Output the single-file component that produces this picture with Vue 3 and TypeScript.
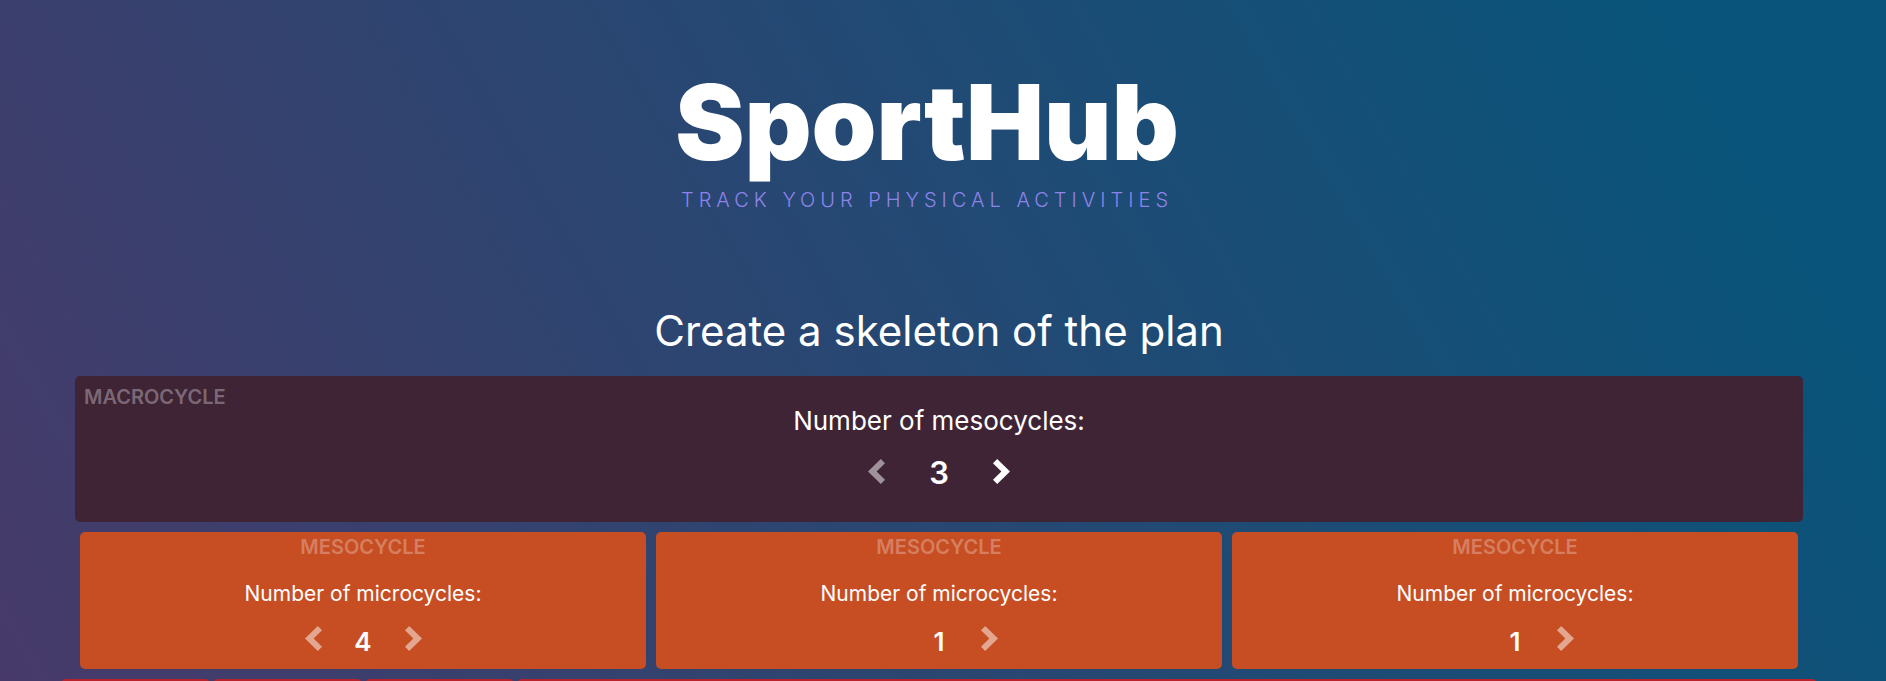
<script setup lang="ts">
import { computed, ref } from 'vue'

const MIN = 1
const MAX_MESO = 4

const microCounts = ref<number[]>([4, 1, 1])
const mesoCount = computed(() => microCounts.value.length)
const microcycles = [1, 2, 3, 4]

function addMeso() {
  if (mesoCount.value < MAX_MESO) microCounts.value.push(MIN)
}

function removeMeso() {
  if (mesoCount.value > MIN) microCounts.value.pop()
}

function changeMicro(index: number, delta: number) {
  microCounts.value[index] = Math.max(MIN, microCounts.value[index] + delta)
}
</script>

<template>
  <div class="page">
    <header class="brand">
      <h1 class="logo">SportHub</h1>
      <p class="tagline">TRACK YOUR PHYSICAL ACTIVITIES</p>
    </header>

    <main class="plan">
      <h2 class="title">Create a skeleton of the plan</h2>

      <section class="macro">
        <span class="label">MACROCYCLE</span>
        <div class="body">
          <p class="question">Number of mesocycles:</p>
          <div class="stepper">
            <button class="arrow dim" type="button" aria-label="Fewer mesocycles" @click="removeMeso">
              <svg width="17" height="25" viewBox="0 0 17 25"><path d="M12.8 0 17 4.2 8.6 12.5 17 20.8 12.8 25 0 12.5z" /></svg>
            </button>
            <span class="count">{{ mesoCount }}</span>
            <button class="arrow" type="button" aria-label="More mesocycles" @click="addMeso">
              <svg width="17" height="25" viewBox="0 0 17 25"><path d="M4.2 0 0 4.2 8.4 12.5 0 20.8 4.2 25 17 12.5z" /></svg>
            </button>
          </div>
        </div>
      </section>

      <div class="mesos">
        <section v-for="(count, i) in microCounts" :key="i" class="meso">
          <span class="label">MESOCYCLE</span>
          <p class="question">Number of microcycles:</p>
          <div class="stepper">
            <button
              class="arrow dim"
              :class="{ hidden: count === MIN }"
              type="button"
              aria-label="Fewer microcycles"
              @click="changeMicro(i, -1)"
            >
              <svg width="17" height="25" viewBox="0 0 17 25"><path d="M12.8 0 17 4.2 8.6 12.5 17 20.8 12.8 25 0 12.5z" /></svg>
            </button>
            <span class="count">{{ count }}</span>
            <button class="arrow dim" type="button" aria-label="More microcycles" @click="changeMicro(i, 1)">
              <svg width="17" height="25" viewBox="0 0 17 25"><path d="M4.2 0 0 4.2 8.4 12.5 0 20.8 4.2 25 17 12.5z" /></svg>
            </button>
          </div>
        </section>
      </div>
    </main>

    <div class="micros">
      <div v-for="n in microcycles" :key="n" class="micro"></div>
    </div>
  </div>
</template>

<style>
body {
  margin: 0;
  overflow: hidden;
}
</style>

<style scoped>
.page {
  height: 100vh;
  overflow: hidden;
  background: linear-gradient(60deg, #473a6a 0%, #09547a 90%);
  color: #fff;
  font-family: Inter, "Liberation Sans", sans-serif;
}

h1,
h2,
p {
  margin: 0;
}

.brand {
  display: flex;
  flex-direction: column;
  align-items: center;
  padding: 67px 32px 0 0;
}

.logo {
  font-size: 104px;
  line-height: 110px;
  font-weight: 900;
}

.tagline {
  margin-top: 11px;
  font-size: 20px;
  line-height: 24px;
  font-weight: 300;
  letter-spacing: 5px;
  color: #8f83ea;
}

.plan {
  padding: 94px 83px 0 75px;
}

.title {
  margin-bottom: 20px;
  font-size: 42px;
  line-height: 50px;
  font-weight: 400;
  text-align: center;
}

.macro {
  display: grid;
  box-sizing: border-box;
  min-height: 146px;
  border-radius: 5px;
  background: #3f2436;
}

.macro > * {
  grid-area: 1 / 1;
}

.label {
  font-size: 20px;
  line-height: 24px;
  font-weight: 600;
  color: rgba(255, 255, 255, 0.28);
}

.macro .label {
  padding: 9px;
  color: rgba(255, 255, 255, 0.33);
}

.body {
  padding-top: 29px;
  text-align: center;
}

.question {
  font-size: 21px;
  line-height: 24px;
}

.macro .question {
  font-size: 26px;
  line-height: 32px;
}

.stepper {
  display: flex;
  justify-content: center;
  align-items: flex-start;
  margin-top: 20px;
}

.macro .stepper {
  margin-top: 22px;
}

.count {
  width: 83px;
  font-size: 26px;
  line-height: 32px;
  font-weight: 600;
  text-align: center;
}

.macro .count {
  width: 108px;
  font-size: 31px;
  line-height: 28px;
}

.arrow {
  padding: 0;
  border: 0;
  background: none;
  color: #fff;
  cursor: pointer;
}

.arrow svg {
  display: block;
  fill: currentColor;
}

.dim {
  opacity: 0.5;
}

.hidden {
  visibility: hidden;
}

.mesos {
  display: flex;
  gap: 10px;
  padding: 10px 5px;
}

.meso {
  display: flex;
  flex: 1;
  flex-direction: column;
  align-items: center;
  box-sizing: border-box;
  min-height: 137px;
  padding-top: 3px;
  border-radius: 5px;
  background: #c74e23;
}

.meso .question {
  margin-top: 23px;
}

.micros {
  display: grid;
  grid-template-columns: 149fr 149fr 149fr 1299fr;
  gap: 3px;
  padding: 0 69px 0 61px;
}

.micro {
  height: 140px;
  border-radius: 5px;
  background: #b9222b;
}
</style>
